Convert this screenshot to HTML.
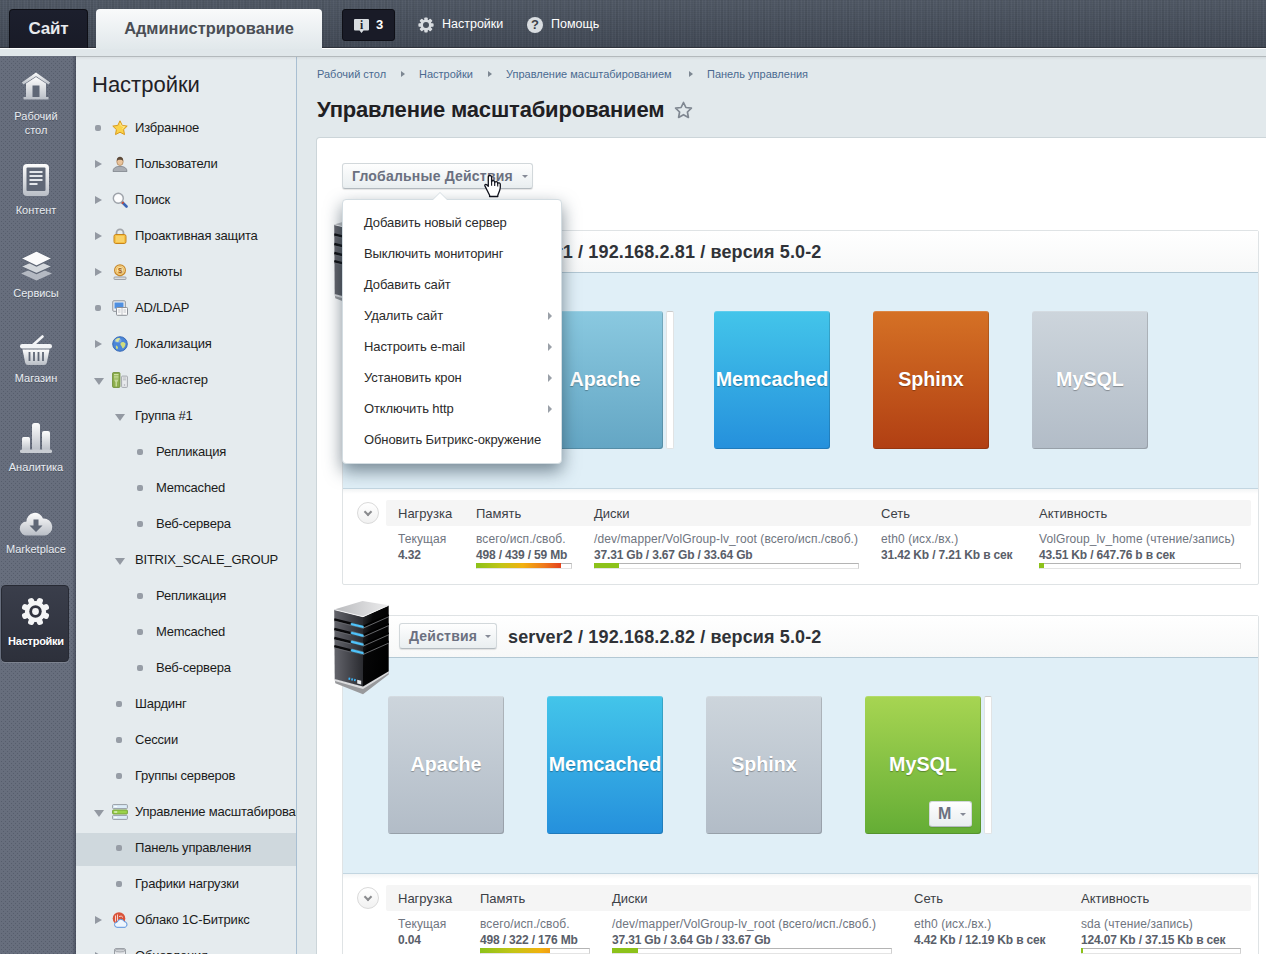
<!DOCTYPE html>
<html lang="ru">
<head>
<meta charset="utf-8">
<title>Управление масштабированием</title>
<style>
*{box-sizing:border-box;margin:0;padding:0}
html,body{width:1266px;height:954px;overflow:hidden}
body{font-family:"Liberation Sans",Arial,sans-serif;font-size:13px;color:#1a1a1a;background:#e2e9ec;position:relative}
.abs{position:absolute}
/* top bar */
#top{position:absolute;left:0;top:0;width:1266px;height:48px;background:#49515d;border-bottom:1px solid #2e333c;
 background-image:repeating-linear-gradient(90deg,rgba(255,255,255,.035) 0,rgba(255,255,255,.035) 1px,transparent 1px,transparent 3px),repeating-linear-gradient(0deg,rgba(0,0,0,.05) 0,rgba(0,0,0,.05) 1px,transparent 1px,transparent 2px),repeating-linear-gradient(90deg,rgba(0,0,0,.04) 0,rgba(0,0,0,.04) 2px,transparent 2px,transparent 7px),linear-gradient(#515966,#424a56)}
#strip{position:absolute;left:0;top:48px;width:1266px;height:8px;background:#e0e7ea;border-top:1px solid #fff}
#tab-site{position:absolute;left:9px;top:9px;width:79px;height:39px;background:linear-gradient(#1c1f2d,#191b27);border:1px solid #0e0f16;border-bottom:none;border-radius:4px 4px 0 0;
 color:#e8eaee;font-weight:bold;font-size:17px;letter-spacing:-.2px;text-align:center;line-height:37px}
#tab-admin{position:absolute;left:96px;top:9px;width:226px;height:40px;background:linear-gradient(#f9fafb,#e1e8eb);border-radius:4px 4px 0 0;
 color:#4a4e55;font-weight:bold;font-size:16.4px;text-align:center;line-height:38px}
#notif{position:absolute;left:342px;top:9px;width:53px;height:32px;background:#191b27;border:1px solid #0e0f16;border-radius:3px;color:#fff;font-weight:bold;font-size:12px}
.toplink{position:absolute;top:17px;color:#fff;font-size:12.5px;line-height:15px}
/* left nav */
#lnav{position:absolute;left:0;top:56px;width:76px;height:898px;background:#676e7d;
 background-image:linear-gradient(to right,transparent 72px,rgba(40,45,60,.45) 76px),radial-gradient(circle at 1.5px 1.5px,#565d6c 0.5px,transparent 0.75px),radial-gradient(circle at 1.5px 1.5px,#565d6c 0.5px,transparent 0.75px);
 background-size:76px 100%,4px 4px,4px 4px;background-position:0 0,0 0,2px 2px}
.ln{position:absolute;left:0;width:72px;text-align:center;color:#e9edf2;font-size:11px;line-height:14px;font-weight:normal;text-shadow:0 1px 0 rgba(0,0,0,.25)}
#ln-act{position:absolute;left:1px;top:529px;width:68px;height:77px;background:linear-gradient(#3a3e4b,#2d303b);border-radius:4px;border:1px solid #272a34;box-shadow:0 1px 0 rgba(255,255,255,.15)}
/* submenu */
#sub{position:absolute;left:76px;top:56px;width:221px;height:898px;background:#e5ebee;border-right:1px solid #a9bfd2;overflow:hidden}
#sub h2{position:absolute;left:16px;top:15px;font-size:22px;font-weight:normal;color:#1f2126;line-height:28px}
.mi{position:absolute;left:0;width:260px;height:36px;line-height:36px;font-size:13px;letter-spacing:-.2px;color:#1b1b1b;white-space:nowrap}
.mi.sel{background:linear-gradient(#cfd8dd,#cfd8dd) no-repeat 0 3px/220px 33px}
.dot{position:absolute;width:6px;height:6px;border-radius:2px;background:#979da6;top:15px}
.arr-r{position:absolute;top:14px;width:0;height:0;border-left:7px solid #9399a2;border-top:4.5px solid transparent;border-bottom:4.5px solid transparent}
.arr-d{position:absolute;top:16px;width:0;height:0;border-top:7px solid #9399a2;border-left:5px solid transparent;border-right:5px solid transparent}
.mi span.t{position:absolute;top:0}
.ic{position:absolute;left:36px;top:10px;width:16px;height:16px}
/* content */
#crumbs{position:absolute;left:317px;top:67px;font-size:11px;color:#4a6990;line-height:14px;white-space:nowrap}
#crumbs span{position:absolute;top:0}
.ca{position:absolute;top:4px;width:0;height:0;border-left:4px solid #7d8792;border-top:3px solid transparent;border-bottom:3px solid transparent}
#title{position:absolute;left:317px;top:96px;font-size:22px;letter-spacing:-.19px;font-weight:bold;color:#1f2023;line-height:28px;white-space:nowrap}
#panel{position:absolute;left:317px;top:138px;width:960px;height:830px;background:#fff;border:1px solid transparent;background-clip:border-box;box-shadow:0 0 0 1px #ccd5d9;border-radius:3px}

.btn{position:absolute;height:26px;border-radius:3px;background:linear-gradient(#fefefe,#e9eef0);border:1px solid #d2d8db;border-bottom-color:#b4bbc0;box-shadow:0 1px 1px rgba(0,0,0,.1);font-size:14px;letter-spacing:.2px;font-weight:bold;color:#6b7080;line-height:24px;white-space:nowrap}
.btn span{position:absolute;top:0}
.caret{position:absolute;top:11px;width:0;height:0;border-top:3.5px solid #858a96;border-left:3.5px solid transparent;border-right:3.5px solid transparent}
.srv{position:absolute;left:24px;width:917px;height:355px;border:1px solid #dfe3e5;border-radius:2px;background:#fff}
.srv-h{position:absolute;left:0;top:0;width:915px;height:42px;background:linear-gradient(#fff,#f7f8f8);border-bottom:1px solid #b3c8d4}
.srv-t{position:absolute;top:8px;font-size:18px;letter-spacing:.13px;font-weight:bold;color:#2f3237;line-height:26px;white-space:nowrap}
.srv-b{position:absolute;left:0;top:42px;width:915px;height:216px;background:#e0eff7;border-bottom:1px solid #c3d6e1}
.tile{position:absolute;top:38px;width:116px;height:138px;border-radius:3px;color:#fff;font-size:19.7px;font-weight:bold;text-align:center;line-height:136px;white-space:nowrap;text-shadow:0 1px 1px rgba(0,0,0,.3);box-shadow:inset -1px -1px 0 rgba(0,0,0,.15),inset 0 1px 0 rgba(255,255,255,.15)}
.t-gray{background:linear-gradient(#cdd5dc,#b2bcc7)}
.t-teal{background:linear-gradient(#8ac9e0,#64a6c4)}
.t-blue{background:linear-gradient(#43c5ea,#2590dc)}
.t-orange{background:linear-gradient(#d57125,#b13f13)}
.t-green{background:linear-gradient(#a7d552,#64ad35)}
.tstrip{position:absolute;top:38px;width:8px;height:138px;background:#fff;border:1px solid #e1e3e4;border-top-color:#cbcbcb;border-radius:2px}
.mbtn{left:64px;top:105px;width:43px;height:26px;text-shadow:none;text-align:left;font-size:16px}
.srv-s{position:absolute;left:0;top:258px;width:915px;height:94px;background:linear-gradient(#f3f5f6,#fff 5px)}
.circ{position:absolute;left:14px;top:13px;width:22px;height:22px;border-radius:11px;border:1px solid #dadada;background:linear-gradient(#fff,#f1f1f1)}
.circ:after{content:"";position:absolute;left:7px;top:5.5px;width:4px;height:4px;border-right:2px solid #8a8b8e;border-bottom:2px solid #8a8b8e;transform:rotate(45deg)}
.sh{position:absolute;left:43px;top:11px;width:865px;height:26px;background:#f5f5f5;border-radius:2px}
.col{position:absolute;top:11px;white-space:nowrap;font-size:12px;line-height:16px;color:#6f7580}
.col .h{display:block;height:31px;line-height:28px;font-size:13px;font-weight:normal;color:#3c4046}
.col span{display:block;height:16px;letter-spacing:.1px}
.col strong{display:block;height:16px;color:#595e69;letter-spacing:-.17px}
.bar{height:6px;margin-top:0;border:1px solid #d0d0d0;border-top-color:#b4b4b4;border-bottom-color:#e4e4e4;background:#fff;position:relative}
.bar i{position:absolute;left:-1px;top:-1px;height:5px;background:#8cc21a}
.bar i.heat{background-image:linear-gradient(to right,#8cc21a 0,#c3c516 30%,#f2b10f 55%,#ef7a1c 80%,#e4421d 100%);background-repeat:no-repeat}
.srv-ic{position:absolute}
#pop{position:absolute;left:24px;top:60px;width:220px;height:265px;background:#fff;border:1px solid #d4dde2;border-radius:4px;box-shadow:0 7px 17px rgba(45,65,80,.6)}
.pi{position:absolute;left:21px;width:190px;height:31px;line-height:31px;font-size:13px;letter-spacing:-.1px;color:#2b2b2b;white-space:nowrap}
.sa{position:absolute;left:184px;top:12px;width:0;height:0;border-left:4px solid #9aa0a8;border-top:4px solid transparent;border-bottom:4px solid transparent}
.pa{position:absolute;left:89px;top:-8px;width:0;height:0;border-bottom:8px solid #d4dde2;border-left:8px solid transparent;border-right:8px solid transparent}
.pb{position:absolute;left:90px;top:-7px;width:0;height:0;border-bottom:7px solid #fff;border-left:7px solid transparent;border-right:7px solid transparent}
</style>
</head>
<body>
<div id="top"></div>
<div id="strip"></div>
<div id="tab-site">Сайт</div>
<div id="tab-admin">Администрирование</div>
<div id="notif"><svg class="abs" style="left:11px;top:9px" width="15" height="15" viewBox="0 0 15 15"><path d="M1 0h13a1 1 0 0 1 1 1v9.5a1 1 0 0 1-1 1H9.5L7.5 14 5.5 11.5H1a1 1 0 0 1-1-1V1a1 1 0 0 1 1-1z" fill="#d9dde1"/><text x="7.5" y="10" text-anchor="middle" font-family="Liberation Serif,serif" font-weight="bold" font-size="11.5" fill="#1a1c29">i</text></svg><span class="abs" style="left:33px;top:7px;line-height:16px;font-size:13px">3</span></div>
<svg class="abs" style="left:418px;top:17px" width="16" height="16" viewBox="-8 -8 16 16"><g fill="#d9dde1"><circle r="5.6"/><rect x="-1.7" y="-7.6" width="3.4" height="4" rx=".8"/><rect x="-1.7" y="-7.6" width="3.4" height="4" rx=".8" transform="rotate(45)"/><rect x="-1.7" y="-7.6" width="3.4" height="4" rx=".8" transform="rotate(90)"/><rect x="-1.7" y="-7.6" width="3.4" height="4" rx=".8" transform="rotate(135)"/><rect x="-1.7" y="-7.6" width="3.4" height="4" rx=".8" transform="rotate(180)"/><rect x="-1.7" y="-7.6" width="3.4" height="4" rx=".8" transform="rotate(225)"/><rect x="-1.7" y="-7.6" width="3.4" height="4" rx=".8" transform="rotate(270)"/><rect x="-1.7" y="-7.6" width="3.4" height="4" rx=".8" transform="rotate(315)"/></g><circle r="3" fill="#49515d"/></svg>
<div class="abs" style="left:527px;top:17px;width:16px;height:16px;border-radius:8px;background:#d9dde1;color:#3d4249;font-weight:bold;font-size:13px;line-height:16px;text-align:center">?</div>
<div class="toplink" style="left:442px">Настройки</div>
<div class="toplink" style="left:551px">Помощь</div>

<div id="lnav">
<div id="ln-act"></div>
<svg class="abs" style="left:21px;top:16px" width="30" height="28" viewBox="0 0 30 28"><defs><linearGradient id="g1" x1="0" y1="0" x2="0" y2="1"><stop offset="0" stop-color="#fdfdfd"/><stop offset="1" stop-color="#b9bec6"/></linearGradient></defs><path d="M15 .5L.8 10.6l1.7 2L15 4.2l12.5 8.4 1.7-2z" fill="url(#g1)"/><path d="M5 11.5L15 5l10 6.5V25h2.5v2.5h-25V25H5z" fill="url(#g1)"/><rect x="11.5" y="13.5" width="7" height="11.5" fill="#5f6776"/></svg>
<div class="ln" style="top:53px">Рабочий<br>стол</div>
<svg class="abs" style="left:22px;top:107px" width="28" height="34" viewBox="0 0 28 34"><rect x="1" y="1" width="26" height="32" rx="4" fill="url(#g1)"/><rect x="4.5" y="4.5" width="19" height="23.5" rx="1" fill="#5f6776"/><path d="M7.5 9h13M7.5 13h13M7.5 17h13M7.5 21h8" stroke="#e4e7eb" stroke-width="2"/></svg>
<div class="ln" style="top:147px">Контент</div>
<svg class="abs" style="left:20px;top:194px" width="33" height="32" viewBox="0 0 33 32"><path d="M16.5 17L1 23.5 16.5 30.5 32 23.5z" fill="#b4b9c2"/><path d="M16.5 9.5L1 16.5 16.5 23.5 32 16.5z" fill="#d3d7dc" stroke="#5f6776" stroke-width="1.2"/><path d="M16.5 1L1 8.5 16.5 16 32 8.5z" fill="#fbfbfc" stroke="#5f6776" stroke-width="1.2"/></svg>
<div class="ln" style="top:230px">Сервисы</div>
<svg class="abs" style="left:19px;top:279px" width="34" height="31" viewBox="0 0 34 31"><path d="M14 10L23.5 1.5" stroke="#f4f5f7" stroke-width="2.6" stroke-linecap="round"/><rect x="1" y="9" width="32" height="4.5" rx="2.2" fill="#f2f4f6"/><path d="M3.5 14.5h27l-2.6 13a3 3 0 0 1-3 2.5H9.1a3 3 0 0 1-3-2.5z" fill="url(#g1)"/><path d="M10.5 17v9M15 17v9M19.5 17v9M24 17v9" stroke="#5f6776" stroke-width="1.8"/></svg>
<div class="ln" style="top:315px">Магазин</div>
<svg class="abs" style="left:19px;top:366px" width="34" height="32" viewBox="0 0 34 32"><rect x="3" y="15" width="8" height="14" rx="1.5" fill="url(#g1)"/><rect x="13" y="1" width="8" height="28" rx="2.5" fill="url(#g1)"/><rect x="23" y="9" width="8" height="20" rx="2" fill="url(#g1)"/><rect x="1" y="27.5" width="32" height="3.5" rx="1.5" fill="#c9cdd3"/></svg>
<div class="ln" style="top:404px">Аналитика</div>
<svg class="abs" style="left:19px;top:455px" width="34" height="26" viewBox="0 0 34 26"><path d="M8 24.5a7 7 0 0 1-.5-14A8.5 8.5 0 0 1 24 7.5a8.5 8.5 0 0 1 1.5 17z" fill="url(#g1)"/><path d="M14.5 8.5h5v6h4l-6.5 6.5-6.5-6.5h4z" fill="#5f6776"/></svg>
<div class="ln" style="top:486px">Marketplace</div>
<svg class="abs" style="left:21px;top:541px" width="29" height="29" viewBox="-14.5 -14.5 29 29"><g fill="#f4f5f6" transform="rotate(22.5)"><circle r="10.5"/><rect x="-3" y="-14.2" width="6" height="8" rx="2.5"/><rect x="-3" y="-14.2" width="6" height="8" rx="2.5" transform="rotate(45)"/><rect x="-3" y="-14.2" width="6" height="8" rx="2.5" transform="rotate(90)"/><rect x="-3" y="-14.2" width="6" height="8" rx="2.5" transform="rotate(135)"/><rect x="-3" y="-14.2" width="6" height="8" rx="2.5" transform="rotate(180)"/><rect x="-3" y="-14.2" width="6" height="8" rx="2.5" transform="rotate(225)"/><rect x="-3" y="-14.2" width="6" height="8" rx="2.5" transform="rotate(270)"/><rect x="-3" y="-14.2" width="6" height="8" rx="2.5" transform="rotate(315)"/></g><circle r="6.2" fill="#30333f"/><circle r="3.4" fill="#f4f5f6"/></svg>
<div class="ln" style="top:578px;font-weight:bold;color:#fff;letter-spacing:-.25px">Настройки</div>
</div>
<div id="sub"><h2>Настройки</h2>
<div class="mi" style="top:54px"><i class="dot" style="left:19px"></i><svg class="ic" viewBox="0 0 16 16"><path d="M8 .8l2.2 4.6 5 .7-3.6 3.5.9 5L8 12.2 3.5 14.6l.9-5L.8 6.1l5-.7z" fill="#fbd34a" stroke="#d99a1c" stroke-width="1" stroke-linejoin="round"/><path d="M8 3l1.4 3 3.2.5-2.3 2.2" fill="none" stroke="#fff3b0" stroke-width=".8" opacity=".8"/></svg><span class="t" style="left:59px">Избранное</span></div>
<div class="mi" style="top:90px"><i class="arr-r" style="left:19px"></i><svg class="ic" viewBox="0 0 16 16"><path d="M1 15.5c0-3.5 2.5-4.5 4.8-5h4.4c2.3.5 4.8 1.5 4.8 5z" fill="#a9adb3" stroke="#7f848b" stroke-width=".8"/><ellipse cx="8" cy="5.6" rx="3.2" ry="3.9" fill="#e9c39b" stroke="#a87f55" stroke-width=".7"/><path d="M4.8 4.8c0-3 1.4-4 3.2-4s3.2 1 3.2 4c-1-1.5-5.4-1.5-6.4 0z" fill="#5d4a3a"/></svg><span class="t" style="left:59px">Пользователи</span></div>
<div class="mi" style="top:126px"><i class="arr-r" style="left:19px"></i><svg class="ic" viewBox="0 0 16 16"><path d="M9.5 9.5l5 5" stroke="#3b64b4" stroke-width="2.6" stroke-linecap="round"/><path d="M9.8 9.8l1.5 1.5" stroke="#d0492b" stroke-width="2.4"/><circle cx="6.3" cy="6.3" r="5" fill="#f4f6f8" stroke="#9ea3aa" stroke-width="1.4"/><circle cx="6.3" cy="6.3" r="3.6" fill="#fff" opacity=".8"/></svg><span class="t" style="left:59px">Поиск</span></div>
<div class="mi" style="top:162px"><i class="arr-r" style="left:19px"></i><svg class="ic" viewBox="0 0 16 16"><path d="M4.5 7V4.8a3.5 3.5 0 0 1 7 0V7" fill="none" stroke="#a3a6ab" stroke-width="1.8"/><rect x="2" y="6.5" width="12" height="9" rx="1.8" fill="#f6c244" stroke="#c8851c" stroke-width="1"/><path d="M4 9h8M4 11h8M4 13h8" stroke="#fbe08c" stroke-width="1"/></svg><span class="t" style="left:59px">Проактивная защита</span></div>
<div class="mi" style="top:198px"><i class="arr-r" style="left:19px"></i><svg class="ic" viewBox="0 0 16 16"><rect x="2" y="13" width="12" height="2.5" rx=".8" fill="#d9dcdf" stroke="#8e9399" stroke-width=".8"/><rect x="6" y="11" width="4" height="2.5" fill="#b9bdc2"/><circle cx="8" cy="6.2" r="5.4" fill="#fbe3a4" stroke="#c8882a" stroke-width="1.2"/><circle cx="8" cy="6.2" r="3.8" fill="none" stroke="#e0a94c" stroke-width=".7"/><text x="8" y="9" font-size="7.5" font-weight="bold" text-anchor="middle" fill="#a8641a" font-family="Liberation Sans,sans-serif">$</text></svg><span class="t" style="left:59px">Валюты</span></div>
<div class="mi" style="top:234px"><i class="dot" style="left:19px"></i><svg class="ic" viewBox="0 0 16 16"><rect x=".8" y=".8" width="12.5" height="10.5" rx="1" fill="#f1f2f4" stroke="#8d9198" stroke-width="1"/><rect x="2.5" y="2.5" width="9" height="6" fill="#4f8fe0"/><rect x="4.5" y="7.5" width="11" height="7.8" rx=".8" fill="#fafafa" stroke="#8d9198" stroke-width="1"/><path d="M10 8v7M6 10h2.5M6 12h2.5M11.5 10H14M11.5 12H14" stroke="#b4b8be" stroke-width=".8"/></svg><span class="t" style="left:59px">AD/LDAP</span></div>
<div class="mi" style="top:270px"><i class="arr-r" style="left:19px"></i><svg class="ic" viewBox="0 0 16 16"><circle cx="8" cy="8" r="7.3" fill="#4b86d8" stroke="#2f62b0" stroke-width=".9"/><path d="M3.5 3.8c1.5-1.8 3.5-2 4.5-1.5 0 1.5-1.5 2-1.5 3.5-1 .5-2 0-3-.5zM9 6.5c1.5-1 3.5-.5 4.5 1 0 2-1 4-2.5 5-1-.5-1-2-2-3-.8-.8-.8-2 0-3zM4 9.5c1 0 2 1 2 2.5l-1 1.5c-1-1-1.5-2.5-1-4z" fill="#cfdc7e"/><ellipse cx="6" cy="4.5" rx="3.5" ry="2.2" fill="#fff" opacity=".25"/></svg><span class="t" style="left:59px">Локализация</span></div>
<div class="mi" style="top:306px"><i class="arr-d" style="left:18px"></i><svg class="ic" viewBox="0 0 16 16"><rect x=".6" y=".6" width="7.3" height="14.8" rx=".8" fill="#8fb04e" stroke="#6c8c34" stroke-width=".9"/><path d="M2 2.5h4.5M2 4.2h4.5M2 5.9h4.5" stroke="#d6e6ad" stroke-width=".9"/><path d="M2 7.5h4.5l-1.5 3v4h-1.5v-4z" fill="#c5d99a"/><rect x="9.6" y="4.1" width="5.8" height="11.3" rx=".8" fill="#e8eaed" stroke="#9da1a7" stroke-width=".9"/><path d="M11 6h3M11 7.8h3" stroke="#a9adb3" stroke-width=".8"/><circle cx="12.5" cy="13" r=".8" fill="#a9adb3"/></svg><span class="t" style="left:59px">Веб-кластер</span></div>
<div class="mi" style="top:342px"><i class="arr-d" style="left:39px"></i><span class="t" style="left:59px">Группа #1</span></div>
<div class="mi" style="top:378px"><i class="dot" style="left:61px"></i><span class="t" style="left:80px">Репликация</span></div>
<div class="mi" style="top:414px"><i class="dot" style="left:61px"></i><span class="t" style="left:80px">Memcached</span></div>
<div class="mi" style="top:450px"><i class="dot" style="left:61px"></i><span class="t" style="left:80px">Веб-сервера</span></div>
<div class="mi" style="top:486px"><i class="arr-d" style="left:39px"></i><span class="t" style="left:59px">BITRIX_SCALE_GROUP</span></div>
<div class="mi" style="top:522px"><i class="dot" style="left:61px"></i><span class="t" style="left:80px">Репликация</span></div>
<div class="mi" style="top:558px"><i class="dot" style="left:61px"></i><span class="t" style="left:80px">Memcached</span></div>
<div class="mi" style="top:594px"><i class="dot" style="left:61px"></i><span class="t" style="left:80px">Веб-сервера</span></div>
<div class="mi" style="top:630px"><i class="dot" style="left:40px"></i><span class="t" style="left:59px">Шардинг</span></div>
<div class="mi" style="top:666px"><i class="dot" style="left:40px"></i><span class="t" style="left:59px">Сессии</span></div>
<div class="mi" style="top:702px"><i class="dot" style="left:40px"></i><span class="t" style="left:59px">Группы серверов</span></div>
<div class="mi" style="top:738px"><i class="arr-d" style="left:18px"></i><svg class="ic" viewBox="0 0 16 16"><rect x=".6" y=".6" width="14.8" height="4" rx=".8" fill="#dcecf8" stroke="#8f959c" stroke-width=".9"/><rect x=".6" y="6" width="14.8" height="4" rx=".8" fill="#9ad24a" stroke="#6f9d34" stroke-width=".9"/><rect x=".6" y="11.4" width="14.8" height="4" rx=".8" fill="#dcecf8" stroke="#8f959c" stroke-width=".9"/><path d="M2.2 2.6h3M2.2 8h3M2.2 13.4h3" stroke="#fff" stroke-width="1"/></svg><span class="t" style="left:59px">Управление масштабированием</span></div>
<div class="mi sel" style="top:774px"><i class="dot" style="left:40px"></i><span class="t" style="left:59px">Панель управления</span></div>
<div class="mi" style="top:810px"><i class="dot" style="left:40px"></i><span class="t" style="left:59px">Графики нагрузки</span></div>
<div class="mi" style="top:846px"><i class="arr-r" style="left:19px"></i><svg class="ic" viewBox="0 0 16 16"><circle cx="7" cy="6.5" r="6.3" fill="#d9533a"/><path d="M3.5 3.5v6M5.5 2.5v7" stroke="#fbe0d8" stroke-width=".9"/><path d="M7 4.5a3 3 0 0 1 4 1" stroke="#fbe0d8" stroke-width=".9" fill="none"/><path d="M5 15.3a2.6 2.6 0 0 1 .3-5.2 3.6 3.6 0 0 1 6.8-.6 3 3 0 0 1 1 5.8z" fill="#eef5fd" stroke="#5b93de" stroke-width="1"/></svg><span class="t" style="left:59px">Облако 1С-Битрикс</span></div>
<div class="mi" style="top:882px"><i class="arr-r" style="left:19px"></i><svg class="ic" viewBox="0 0 16 16"><rect x="2.5" y=".6" width="11" height="15" rx="1.5" fill="#e6e8eb" stroke="#8f949b" stroke-width=".9"/><ellipse cx="8" cy="2.5" rx="5" ry="1.5" fill="#cfd2d6" stroke="#8f949b" stroke-width=".7"/><rect x="5" y="6" width="6" height="5" fill="#4f8fe0"/></svg><span class="t" style="left:59px">Обновления</span></div>
</div>

<div class="abs" style="left:76px;top:56px;width:1190px;height:4px;background:linear-gradient(#b3b9bc 0,#b3b9bc 1px,rgba(0,0,0,.05) 1px,transparent 4px)"></div>
<div id="crumbs"><span style="left:0">Рабочий стол</span><i class="ca" style="left:84px"></i><span style="left:102px">Настройки</span><i class="ca" style="left:171px"></i><span style="left:189px">Управление масштабированием</span><i class="ca" style="left:372px"></i><span style="left:390px">Панель управления</span></div>
<div id="title">Управление масштабированием</div>
<svg class="abs" style="left:674px;top:101px" width="19" height="18" viewBox="0 0 19 18"><path d="M9.5 1.5l2.4 5 5.5.7-4 3.8 1 5.4-4.9-2.7-4.9 2.7 1-5.4-4-3.8 5.5-.7z" fill="none" stroke="#7f8791" stroke-width="1.7" stroke-linejoin="round"/></svg>
<div id="panel">
 <div class="btn" style="left:24px;top:24px;width:191px"><span style="left:9px">Глобальные Действия</span><i class="caret" style="left:179px"></i></div>

 <!-- server 1 -->
 <div class="srv" style="top:91px">
  <div class="srv-h"><div class="srv-t" style="left:165px">server1 / 192.168.2.81 / версия 5.0-2</div></div>
  <div class="srv-b">
   <div class="tile t-teal" style="left:204px">Apache</div><i class="tstrip" style="left:323px"></i>
   <div class="tile t-blue" style="left:371px">Memcached</div>
   <div class="tile t-orange" style="left:530px">Sphinx</div>
   <div class="tile t-gray" style="left:689px">MySQL</div>
  </div>
  <div class="srv-s">
   <div class="circ"></div>
   <div class="sh"></div>
   <div class="col" style="left:55px"><b class="h">Нагрузка</b><span>Текущая</span><strong>4.32</strong></div>
   <div class="col" style="left:133px"><b class="h">Память</b><span>всего/исп./своб.</span><strong>498 / 439 / 59 Mb</strong><div class="bar" style="width:96px"><i class="heat" style="width:85px;background-size:85px 5px"></i></div></div>
   <div class="col" style="left:251px"><b class="h">Диски</b><span>/dev/mapper/VolGroup-lv_root (всего/исп./своб.)</span><strong>37.31 Gb / 3.67 Gb / 33.64 Gb</strong><div class="bar" style="width:265px"><i style="width:25px"></i></div></div>
   <div class="col" style="left:538px"><b class="h">Сеть</b><span>eth0 (исх./вх.)</span><strong>31.42 Kb / 7.21 Kb в сек</strong></div>
   <div class="col" style="left:696px"><b class="h">Активность</b><span>VolGroup_lv_home (чтение/запись)</span><strong>43.51 Kb / 647.76 b в сек</strong><div class="bar" style="width:202px"><i style="width:5px"></i></div></div>
  </div>
 </div>
 <svg class="srv-ic" style="left:16px;top:77px" width="56" height="95" viewBox="0 0 56 95"><defs><linearGradient id="sg1" x1="0" y1="0" x2="1" y2="0"><stop offset="0" stop-color="#64656c"/><stop offset=".7" stop-color="#3b3c42"/><stop offset="1" stop-color="#2a2b30"/></linearGradient><linearGradient id="sh1" x1="0" y1="0" x2="1" y2=".6"><stop offset="0" stop-color="#2e2f33"/><stop offset=".35" stop-color="#060607"/><stop offset="1" stop-color="#000"/></linearGradient><linearGradient id="st1" x1="0" y1="0" x2="1" y2="0"><stop offset="0" stop-color="#b9babd"/><stop offset="1" stop-color="#ececed"/></linearGradient></defs><path d="M.7 78L29 85.5 54.7 70.2V73.5L29 93.2 1.3 82.2z" fill="#98999c"/><path d="M.7 78L29 85.5 54.7 70.2V72L29 88 .9 80z" fill="#dcdcde"/><path d="M.2 8.6L29 15.7V85.5L.7 78z" fill="url(#sg1)"/><path d="M29 15.7L54.7 4.3V70.2L29 85.5z" fill="url(#sh1)"/><path d="M28.5 0L.2 8.6 29 15.7 54.7 4.3z" fill="url(#st1)"/><path d="M.2 8.6L29 15.7 54.7 4.3" fill="none" stroke="#f4f4f5" stroke-width="1"/><path d="M.3 18.4L29 25.5M.3 28L29 35.1M.3 37L29 44.1M.3 45.2L29 52.3" stroke="#09090b" stroke-width="2.4"/><path d="M.3 20.3L17 24.4M.3 29.9L17 34M.3 38.9L17 43M.3 47.1L17 51.2" stroke="#6a6b71" stroke-width=".7"/><path d="M29 25.6L54.7 14.2M29 34.4L54.7 23M29 43.6L54.7 32.2M29 51.9L54.7 40.5" stroke="#000" stroke-width="2"/><path d="M29 27.2L54.7 15.8M29 36L54.7 24.6M29 45.2L54.7 33.8M29 53.5L54.7 42.1" stroke="#7f8084" stroke-width=".8"/><path d="M18 23.2L28.5 25.8M18 32L28.5 34.6M18 40.9L28.5 43.5M18 49.4L28.5 52" stroke="#8fe0ff" stroke-width="3.4" stroke-linecap="round" opacity=".35"/><path d="M18 23.2L28.5 25.8M18 32L28.5 34.6M18 40.9L28.5 43.5M18 49.4L28.5 52" stroke="#4fc3fb" stroke-width="2.2" stroke-linecap="round"/><path d="M14.5 77.5l1.6.4M17.3 78.2l1.6.4M20.1 78.9l1.6.4" stroke="#3db4f7" stroke-width="2.2"/><path d="M23.2 78.8l4 1v3.8l-4-1z" fill="#e6e7e9"/></svg>

 <!-- server 2 -->
 <div class="srv" style="top:476px">
  <div class="srv-h"><div class="btn" style="left:56px;top:7px;width:98px"><span style="left:9px">Действия</span><i class="caret" style="left:85px"></i></div><div class="srv-t" style="left:165px">server2 / 192.168.2.82 / версия 5.0-2</div></div>
  <div class="srv-b">
   <div class="tile t-gray" style="left:45px">Apache</div>
   <div class="tile t-blue" style="left:204px">Memcached</div>
   <div class="tile t-gray" style="left:363px">Sphinx</div>
   <div class="tile t-green" style="left:522px">MySQL<div class="btn mbtn"><span style="left:8px">M</span><i class="caret" style="left:30px"></i></div></div><i class="tstrip" style="left:641px"></i>
  </div>
  <div class="srv-s">
   <div class="circ"></div>
   <div class="sh"></div>
   <div class="col" style="left:55px"><b class="h">Нагрузка</b><span>Текущая</span><strong>0.04</strong></div>
   <div class="col" style="left:137px"><b class="h">Память</b><span>всего/исп./своб.</span><strong>498 / 322 / 176 Mb</strong><div class="bar" style="width:110px"><i class="heat" style="width:70px;background-size:110px 5px"></i></div></div>
   <div class="col" style="left:269px"><b class="h">Диски</b><span>/dev/mapper/VolGroup-lv_root (всего/исп./своб.)</span><strong>37.31 Gb / 3.64 Gb / 33.67 Gb</strong><div class="bar" style="width:280px"><i style="width:26px"></i></div></div>
   <div class="col" style="left:571px"><b class="h">Сеть</b><span>eth0 (исх./вх.)</span><strong>4.42 Kb / 12.19 Kb в сек</strong></div>
   <div class="col" style="left:738px"><b class="h">Активность</b><span>sda (чтение/запись)</span><strong>124.07 Kb / 37.15 Kb в сек</strong><div class="bar" style="width:160px"><i style="width:2px"></i></div></div>
  </div>
 </div>
 <svg class="srv-ic" style="left:16px;top:462px" width="56" height="95" viewBox="0 0 56 95"><defs><linearGradient id="sg2" x1="0" y1="0" x2="1" y2="0"><stop offset="0" stop-color="#64656c"/><stop offset=".7" stop-color="#3b3c42"/><stop offset="1" stop-color="#2a2b30"/></linearGradient><linearGradient id="sh2" x1="0" y1="0" x2="1" y2=".6"><stop offset="0" stop-color="#2e2f33"/><stop offset=".35" stop-color="#060607"/><stop offset="1" stop-color="#000"/></linearGradient><linearGradient id="st2" x1="0" y1="0" x2="1" y2="0"><stop offset="0" stop-color="#b9babd"/><stop offset="1" stop-color="#ececed"/></linearGradient></defs><path d="M.7 78L29 85.5 54.7 70.2V73.5L29 93.2 1.3 82.2z" fill="#98999c"/><path d="M.7 78L29 85.5 54.7 70.2V72L29 88 .9 80z" fill="#dcdcde"/><path d="M.2 8.6L29 15.7V85.5L.7 78z" fill="url(#sg2)"/><path d="M29 15.7L54.7 4.3V70.2L29 85.5z" fill="url(#sh2)"/><path d="M28.5 0L.2 8.6 29 15.7 54.7 4.3z" fill="url(#st2)"/><path d="M.2 8.6L29 15.7 54.7 4.3" fill="none" stroke="#f4f4f5" stroke-width="1"/><path d="M.3 18.4L29 25.5M.3 28L29 35.1M.3 37L29 44.1M.3 45.2L29 52.3" stroke="#09090b" stroke-width="2.4"/><path d="M.3 20.3L17 24.4M.3 29.9L17 34M.3 38.9L17 43M.3 47.1L17 51.2" stroke="#6a6b71" stroke-width=".7"/><path d="M29 25.6L54.7 14.2M29 34.4L54.7 23M29 43.6L54.7 32.2M29 51.9L54.7 40.5" stroke="#000" stroke-width="2"/><path d="M29 27.2L54.7 15.8M29 36L54.7 24.6M29 45.2L54.7 33.8M29 53.5L54.7 42.1" stroke="#7f8084" stroke-width=".8"/><path d="M18 23.2L28.5 25.8M18 32L28.5 34.6M18 40.9L28.5 43.5M18 49.4L28.5 52" stroke="#8fe0ff" stroke-width="3.4" stroke-linecap="round" opacity=".35"/><path d="M18 23.2L28.5 25.8M18 32L28.5 34.6M18 40.9L28.5 43.5M18 49.4L28.5 52" stroke="#4fc3fb" stroke-width="2.2" stroke-linecap="round"/><path d="M14.5 77.5l1.6.4M17.3 78.2l1.6.4M20.1 78.9l1.6.4" stroke="#3db4f7" stroke-width="2.2"/><path d="M23.2 78.8l4 1v3.8l-4-1z" fill="#e6e7e9"/></svg>

 <!-- popup menu -->
 <div id="pop">
  <i class="pa"></i><i class="pb"></i>
  <div class="pi" style="top:7px">Добавить новый сервер</div>
  <div class="pi" style="top:38px">Выключить мониторинг</div>
  <div class="pi" style="top:69px">Добавить сайт</div>
  <div class="pi" style="top:100px">Удалить сайт<i class="sa"></i></div>
  <div class="pi" style="top:131px">Настроить e-mail<i class="sa"></i></div>
  <div class="pi" style="top:162px">Установить крон<i class="sa"></i></div>
  <div class="pi" style="top:193px">Отключить http<i class="sa"></i></div>
  <div class="pi" style="top:224px">Обновить Битрикс-окружение</div>
 </div>
</div>
<svg class="abs" style="left:483px;top:174px" width="19" height="24" viewBox="-1 -1 19 24"><path d="M5.8.5C4.6.5 4.3 1.2 4.3 2.2V11.3L2.7 9.7C1.8 8.9.3 9.6.9 10.9L5.6 20.3V21.5H13.8V20.2C15.4 16.4 16.3 14.2 16.3 12.2V9.3C16.3 7.7 14 7.4 13.7 8.7V7.9C13.5 6.3 11 6.2 10.7 7.7V6.9C10.5 5.4 8 5.3 7.6 6.7V2.2C7.6 1.1 7 .5 5.8.5Z" fill="#fff" stroke="#10121c" stroke-width="1.3" stroke-linejoin="round"/><path d="M7.6 6.7v4M10.7 7.7v3.2M13.7 8.7v2.8" stroke="#10121c" stroke-width="1.1"/></svg>
</body>
</html>
